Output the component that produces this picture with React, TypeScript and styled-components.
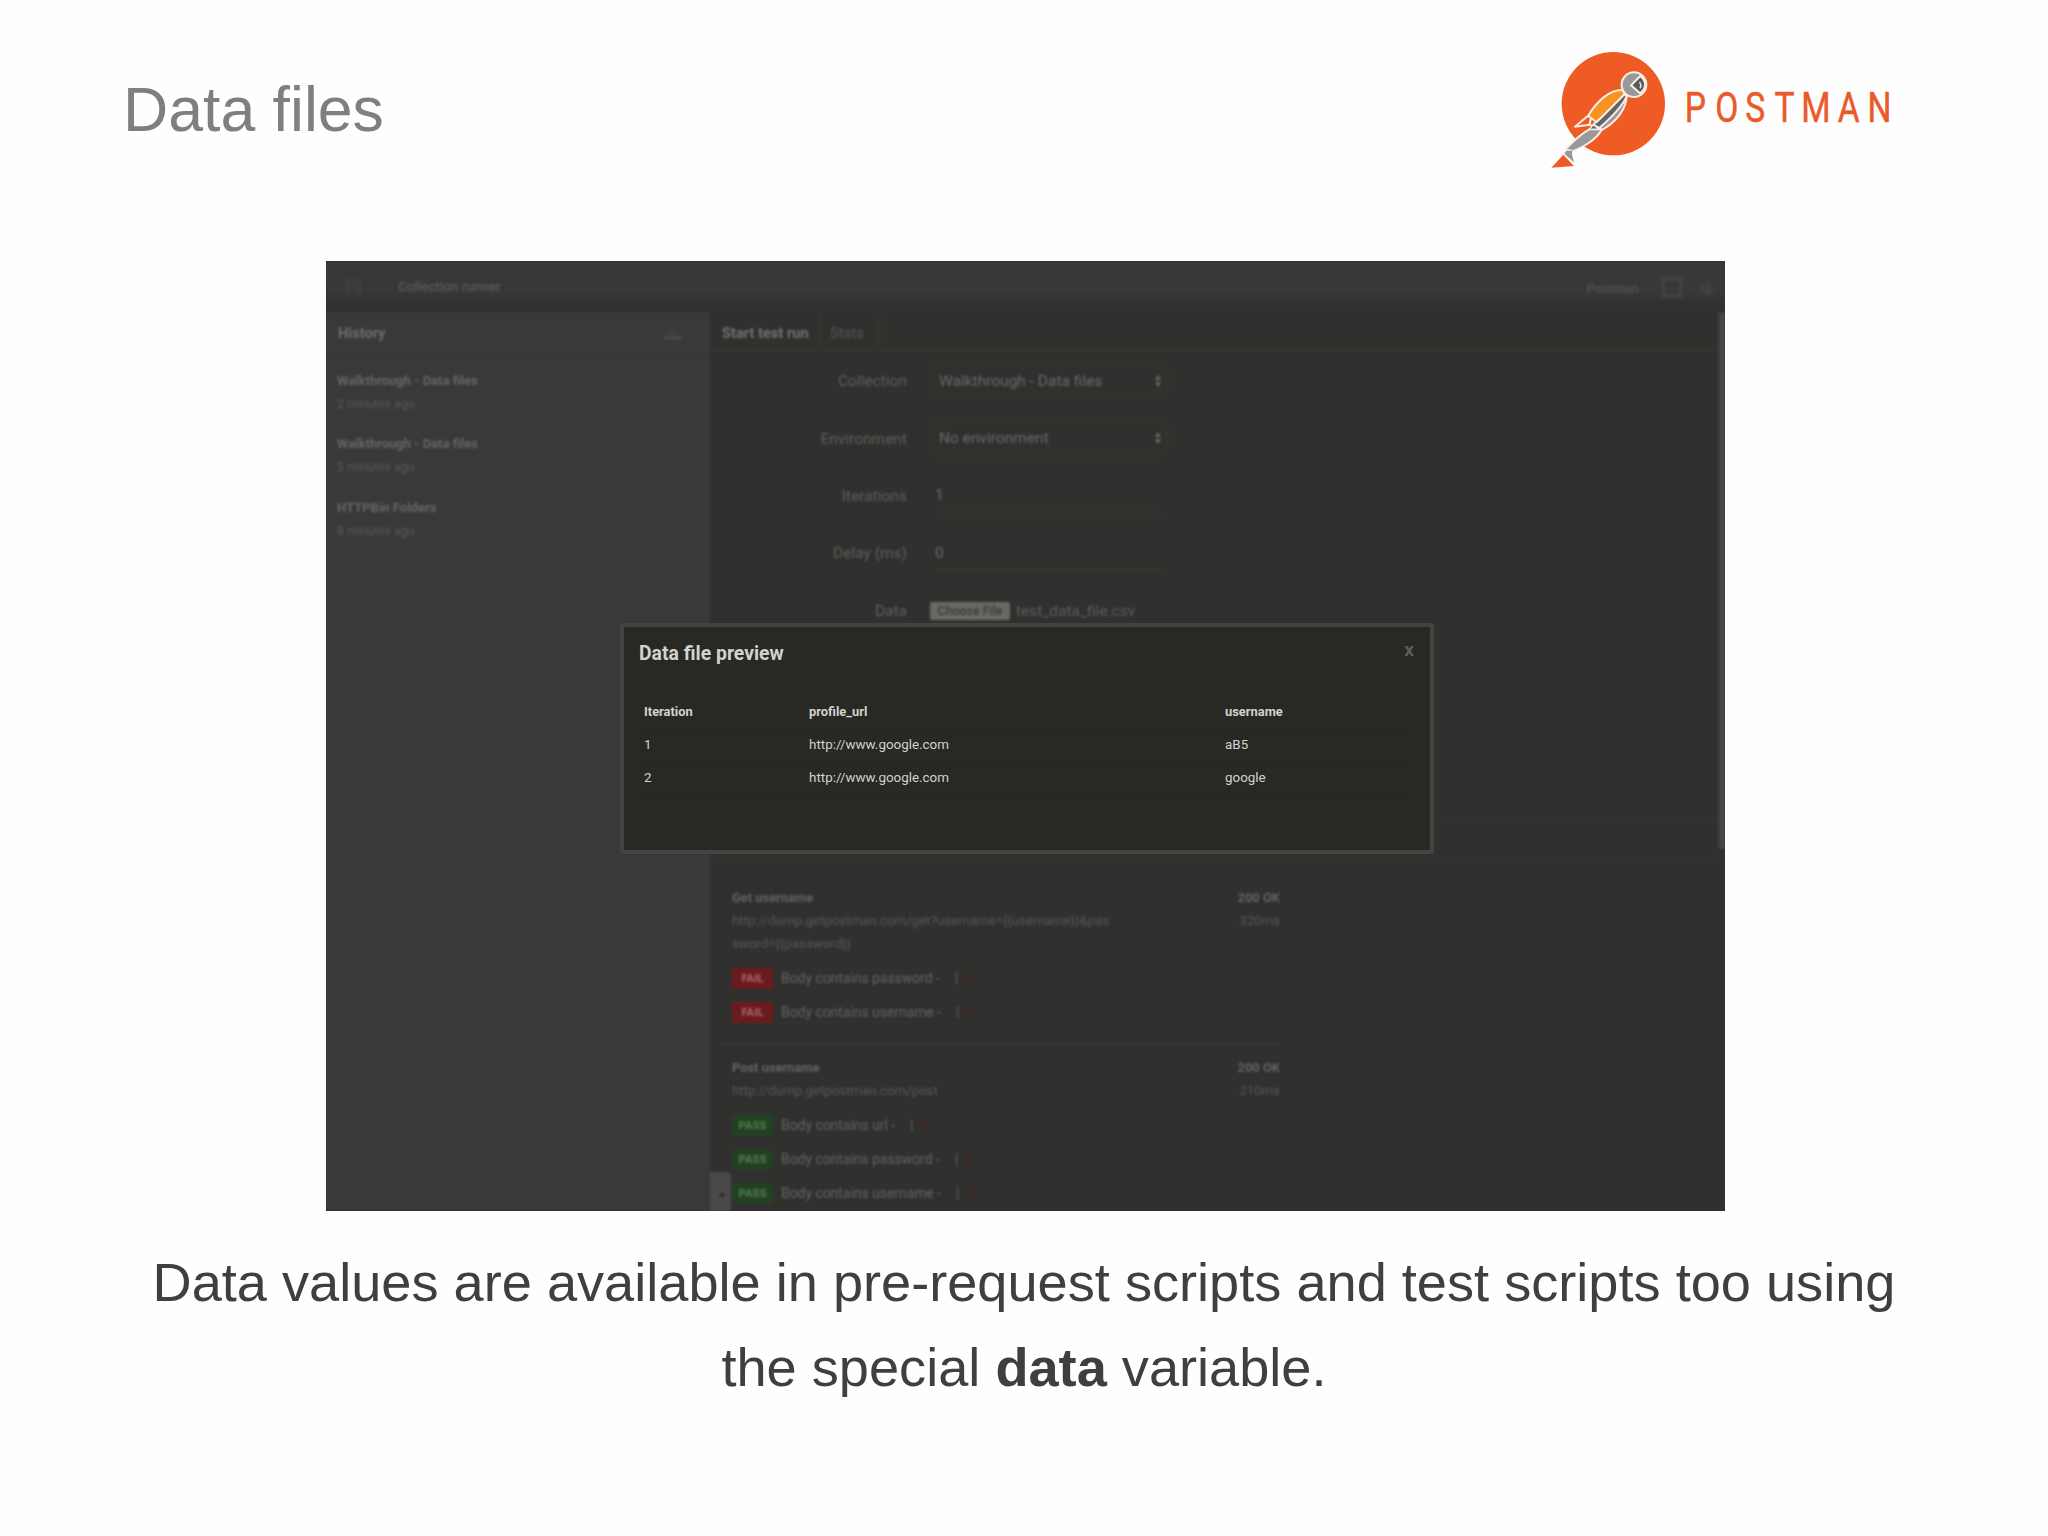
import React from 'react';
import styled, { createGlobalStyle } from 'styled-components';

const GlobalStyle = createGlobalStyle`
  * {
    box-sizing: border-box;
  }
  body {
    background: #fefefe;
    margin: 0;
  }
`;

const Slide = styled.main`
  background: #fefefe;
  display: flex;
  flex-direction: column;
  font-family: 'Liberation Sans', Arial, sans-serif;
  height: 1536px;
  overflow: hidden;
  width: 2048px;
`;

const SlideHeader = styled.header`
  display: flex;
  height: 261px;
  justify-content: space-between;
  padding: 30px 118px 0 123px;
`;

const SlideTitle = styled.h1`
  color: #7f7f7f;
  font-size: 62.6px;
  font-weight: 400;
  line-height: 72px;
  margin: 43px 0 0;
`;

const Caption = styled.p`
  color: #3f3f3f;
  font-size: 54.17px;
  line-height: 84.7px;
  margin: 29px 0 0;
  text-align: center;
`;

const Screen = styled.section`
  background: #30302e;
  font-family: Roboto, 'Liberation Sans', sans-serif;
  height: 950px;
  margin-left: 326px;
  overflow: hidden;
  position: relative;
  width: 1399px;
`;

/* everything behind the open modal is dimmed and out of focus */
const Runner = styled.div`
  display: flex;
  filter: blur(0.9px);
  flex-direction: column;
  height: 100%;
`;

const TopBar = styled.div`
  align-items: center;
  background: linear-gradient(#393939, #383838 60%, #323232 80%, #303030);
  color: #606060;
  display: flex;
  flex: none;
  font-size: 13.6px;
  height: 51px;
  padding: 0 9px 0 18px;
  svg {
    flex: none;
  }
`;

const TopTitle = styled.span`
  flex: 1;
  margin: -2px 0 0 36px;
`;

const TopLink = styled.span`
  color: #505050;
  font-size: 13px;
  font-weight: 500;
  margin: 3px 21px 0 0;
`;

const Columns = styled.div`
  display: flex;
  flex: 1;
  min-height: 0;
`;

const Sidebar = styled.aside`
  background: #393939;
  flex: none;
  width: 384px;
`;

const SidebarHeader = styled.div`
  align-items: center;
  border-bottom: 1px solid #363636;
  color: #6b6b6b;
  display: flex;
  font-size: 14.6px;
  font-weight: 700;
  height: 43px;
  justify-content: space-between;
  padding: 0 27px 0 12px;
`;

const HistoryList = styled.div`
  padding: 15px 11px;
`;

const HistoryItem = styled.div`
  color: #666;
  font-size: 13px;
  font-weight: 700;
  line-height: 22px;
  margin-bottom: 17.3px;
  small {
    color: #585858;
    display: block;
    font-size: 12.3px;
    font-weight: 400;
    line-height: 24px;
  }
`;

const Content = styled.div`
  display: flex;
  flex: 1;
  flex-direction: column;
  min-width: 0;
`;

const Tabs = styled.div`
  border-bottom: 1px solid #383836;
  display: flex;
  flex: none;
  height: 39px;
`;

const Tab = styled.div<{ $active?: boolean }>`
  border-right: 1px solid #373735;
  color: ${({ $active }) => ($active ? '#727271' : '#555554')};
  font-size: 14.6px;
  font-weight: ${({ $active }) => ($active ? 700 : 400)};
  line-height: 42px;
  margin-bottom: ${({ $active }) => ($active ? '-1px' : 0)};
  padding-left: ${({ $active }) => ($active ? 12 : 10)}px;
  width: ${({ $active }) => ($active ? 110 : 60)}px;
`;

const Form = styled.div`
  flex: none;
  height: 470px;
  padding-top: 1px;
`;

const FormRow = styled.div`
  align-items: center;
  color: #5f5f5d;
  display: grid;
  font-size: 15.5px;
  grid-template-columns: 197px 238px;
  column-gap: 23px;
  height: 57.4px;
  > label {
    padding-top: 1px;
    text-align: right;
  }
`;

const Field = styled.div<{ $select?: boolean }>`
  align-items: center;
  border: 1px solid ${({ $select }) => ($select ? '#373735' : 'transparent')};
  border-bottom-color: #373735;
  border-radius: 2px;
  color: #6a6a68;
  display: flex;
  height: 35px;
  justify-content: space-between;
  padding: 0 5px 0 ${({ $select }) => ($select ? 8 : 4)}px;
`;

const FilePicker = styled.div`
  align-items: center;
  display: flex;
  gap: 6px;
  padding-top: 1px;
  button {
    background: #686866;
    border: none;
    border-radius: 2px;
    color: #3a3a38;
    font: 500 12.4px Roboto, sans-serif;
    height: 18px;
    padding: 0;
    width: 80px;
  }
`;

const Strip = styled.div`
  border: solid #393938;
  border-width: 1px 0;
  flex: none;
  height: 41px;
  margin-right: 7px;
`;

const Results = styled.div`
  padding: 12px 0 0 10px;
`;

const Result = styled.div`
  border-bottom: 1px solid #3b3e3c;
  color: #585857;
  font-size: 13.25px;
  line-height: 23px;
  padding: 12px 2px 14px 12px;
  width: 562px;
`;

const ResultHead = styled.div`
  display: flex;
  justify-content: space-between;
  margin-bottom: 6px;
  > :last-child {
    text-align: right;
  }
  strong {
    color: #636362;
    font-size: 12.9px;
  }
`;

const Test = styled.div`
  align-items: center;
  color: #636362;
  display: flex;
  font-size: 13.9px;
  height: 34.2px;
  white-space: pre;
`;

const Badge = styled.span<{ $pass: boolean }>`
  background: ${({ $pass }) => ($pass ? '#234022' : '#6d1a1e')};
  border-radius: 2px;
  color: ${({ $pass }) => ($pass ? '#4f8050' : '#a86a6a')};
  font-size: 11.3px;
  font-weight: 700;
  line-height: 21px;
  margin-right: 8px;
  text-align: center;
  width: 41px;
`;

const Pipe = styled.span`
  margin-left: 15px;
`;

const FailCount = styled.span`
  color: #50272a;
  margin-left: 7px;
`;

const Scrollbar = styled.div`
  background: linear-gradient(90deg, #3e3c40, #4f4d51);
  border-radius: 3px 3px 0 0;
  height: 537px;
  position: absolute;
  right: 0;
  top: 51px;
  width: 7px;
`;

const Collapse = styled.div`
  background: #494949;
  border-radius: 0 4px 0 0;
  bottom: 0;
  color: #2c2c2c;
  font-size: 8px;
  height: 39px;
  left: 384px;
  line-height: 46px;
  position: absolute;
  text-align: center;
  width: 21px;
`;

const Modal = styled.div`
  background: #282824;
  border: 4px solid #434341;
  border-radius: 3px;
  color: #d2d2ce;
  height: 231px;
  left: 294px;
  padding: 0 18px 0 15px;
  position: absolute;
  top: 362px;
  width: 814px;
`;

const ModalHeader = styled.div`
  display: flex;
  height: 69px;
  justify-content: space-between;
  h2 {
    font-size: 19.4px;
    font-weight: 700;
    line-height: 24px;
    margin: 15px 0 0;
  }
  span {
    color: #5b5b58;
    font-size: 19px;
    font-weight: 700;
    line-height: 24px;
    margin-top: 11px;
    transform: translateX(2px);
  }
`;

const PreviewRow = styled.div<{ $head?: boolean }>`
  border-bottom: 1px solid #262622;
  display: grid;
  font-size: ${({ $head }) => ($head ? 12.9 : 13.4)}px;
  font-weight: ${({ $head }) => ($head ? 700 : 400)};
  grid-template-columns: 165px 416px 1fr;
  line-height: 32px;
  padding-left: 5px;
`;

const PostmanLogo = () => (
  <svg width='400' height='150' viewBox='0 0 1200 450' aria-label='Postman'>
    <circle cx='250' cy='221' r='155' fill='#ee5b25' />
    <g stroke='#fbeee8' strokeWidth='6' strokeLinejoin='round'>
      <path d='M174 257L135 290L178 284L207 297L210 274Z' fill='#ee5b25' />
      <path d='M178 284L184 262' fill='none' />
      <path d='M178 298C158 309 128 335 106 358L128 364C155 352 196 334 216 298Z' fill='#97999b' />
      <path d='M290 196C290 238 258 275 216 300L205 288Z' fill='#97999b' />
      <path d='M282 190L290 200C276 228 245 262 208 294L190 284Z' fill='#636466' />
      <path d='M278 180C238 178 200 215 174 258L200 276C222 256 260 216 284 192Z' fill='#f7931e' />
      <path d='M178 298L207 297L190 284Z' fill='#636466' strokeWidth='4' />
      <circle cx='312' cy='164' r='37' fill='#97999b' />
      <path d='M303 166L331 138C350 154 350 174 330 190Z' fill='#58595b' />
    </g>
    <path d='M328 156C334 163 334 169 330 175' fill='none' stroke='#d8dadb' strokeWidth='5' />
    <path d='M109 362L127 362C124 374 129 386 133 398L103 371Z' fill='#97999b' />
    <path d='M100 374L132 408L64 413Z' fill='#ee5b25' />
    <text
      transform='translate(0 275) scale(.8 1)'
      x='580 695 807 917 1017 1154 1266'
      y='0'
      fill='#ea5a2b'
      fontFamily='Roboto, sans-serif'
      fontSize='126'
      fontWeight='400'
      stroke='#ea5a2b'
      strokeWidth='1.5'
      strokeLinejoin='round'
    >
      POSTMAN
    </text>
  </svg>
);

const Arrows = () => (
  <svg width='8' height='14' viewBox='0 0 8 14' fill='#6a6a68'>
    <path d='M4 1L7 6H1Z M4 13L7 8H1Z' />
  </svg>
);

const history = [
  { name: 'Walkthrough - Data files', time: '2 minutes ago' },
  { name: 'Walkthrough - Data files', time: '5 minutes ago' },
  { name: 'HTTPBin Folders', time: '8 minutes ago' },
];

const results = [
  {
    name: 'Get username',
    url: ['http://dump.getpostman.com/get?username={{username}}&pas', 'sword={{password}}'],
    time: '320ms',
    pass: false,
    tests: ['password', 'username'],
  },
  {
    name: 'Post username',
    url: ['http://dump.getpostman.com/post'],
    time: '210ms',
    pass: true,
    tests: ['url', 'password', 'username'],
  },
];

const preview = [
  ['Iteration', 'profile_url', 'username'],
  ['1', 'http://www.google.com', 'aB5'],
  ['2', 'http://www.google.com', 'google'],
];

const CollectionRunner = () => (
  <Runner>
    <TopBar>
      <svg width='18' height='18' viewBox='0 0 18 18' fill='#3e3e3e'>
        <path d='M1 1H17V17H12V8H6V17H1Z' />
      </svg>
      <TopTitle>Collection runner</TopTitle>
      <TopLink>Postman</TopLink>
      <svg width='24' height='24' viewBox='0 0 24 24' fill='none' stroke='#414043' strokeWidth='4'>
        <path d='M3 4H21V21H3Z' />
      </svg>
      <svg width='32' height='18' viewBox='-14 0 32 18' fill='#3f3e41'>
        <path d='M9 3L17 11L9 19L1 11Z' />
      </svg>
    </TopBar>
    <Columns>
      <Sidebar>
        <SidebarHeader>
          History
          <svg width='20' height='16' viewBox='0 0 20 16'>
            <path d='M10 1L17 10H3Z' fill='#3e3e3e' />
            <path d='M1 11H19V15H1Z' fill='#474747' />
          </svg>
        </SidebarHeader>
        <HistoryList>
          {history.map(({ name, time }) => (
            <HistoryItem key={time}>
              {name}
              <small>{time}</small>
            </HistoryItem>
          ))}
        </HistoryList>
      </Sidebar>
      <Content>
        <Tabs>
          <Tab $active>Start test run</Tab>
          <Tab>Stats</Tab>
        </Tabs>
        <Form>
          <FormRow>
            <label>Collection</label>
            <Field $select>
              Walkthrough - Data files
              <Arrows />
            </Field>
          </FormRow>
          <FormRow>
            <label>Environment</label>
            <Field $select>
              No environment
              <Arrows />
            </Field>
          </FormRow>
          <FormRow>
            <label>Iterations</label>
            <Field>1</Field>
          </FormRow>
          <FormRow>
            <label>Delay (ms)</label>
            <Field>0</Field>
          </FormRow>
          <FormRow>
            <label>Data</label>
            <FilePicker>
              <button>Choose File</button>
              test_data_file.csv
            </FilePicker>
          </FormRow>
        </Form>
        <Strip />
        <Results>
          {results.map(({ name, url, time, pass, tests }) => (
            <Result key={name}>
              <ResultHead>
                <div>
                  <strong>{name}</strong>
                  {url.map(line => (
                    <div key={line}>{line}</div>
                  ))}
                </div>
                <div>
                  <strong>200 OK</strong>
                  <div>{time}</div>
                </div>
              </ResultHead>
              {tests.map(test => (
                <Test key={test}>
                  <Badge $pass={pass}>{pass ? 'PASS' : 'FAIL'}</Badge>
                  Body contains {test} -<Pipe>|</Pipe>
                  <FailCount>0</FailCount>
                </Test>
              ))}
            </Result>
          ))}
        </Results>
      </Content>
    </Columns>
    <Scrollbar />
    <Collapse>◀</Collapse>
  </Runner>
);

const DataPreview = () => (
  <Modal>
    <ModalHeader>
      <h2>Data file preview</h2>
      <span>x</span>
    </ModalHeader>
    {preview.map(([iteration, url, username], i) => (
      <PreviewRow key={iteration} $head={i === 0}>
        <span>{iteration}</span>
        <span>{url}</span>
        <span>{username}</span>
      </PreviewRow>
    ))}
  </Modal>
);

export default function App() {
  return (
    <Slide>
      <GlobalStyle />
      <SlideHeader>
        <SlideTitle>Data files</SlideTitle>
        <PostmanLogo />
      </SlideHeader>
      <Screen>
        <CollectionRunner />
        <DataPreview />
      </Screen>
      <Caption>
        Data values are available in pre-request scripts and test scripts too using
        <br />
        the special <b>data</b> variable.
      </Caption>
    </Slide>
  );
}
